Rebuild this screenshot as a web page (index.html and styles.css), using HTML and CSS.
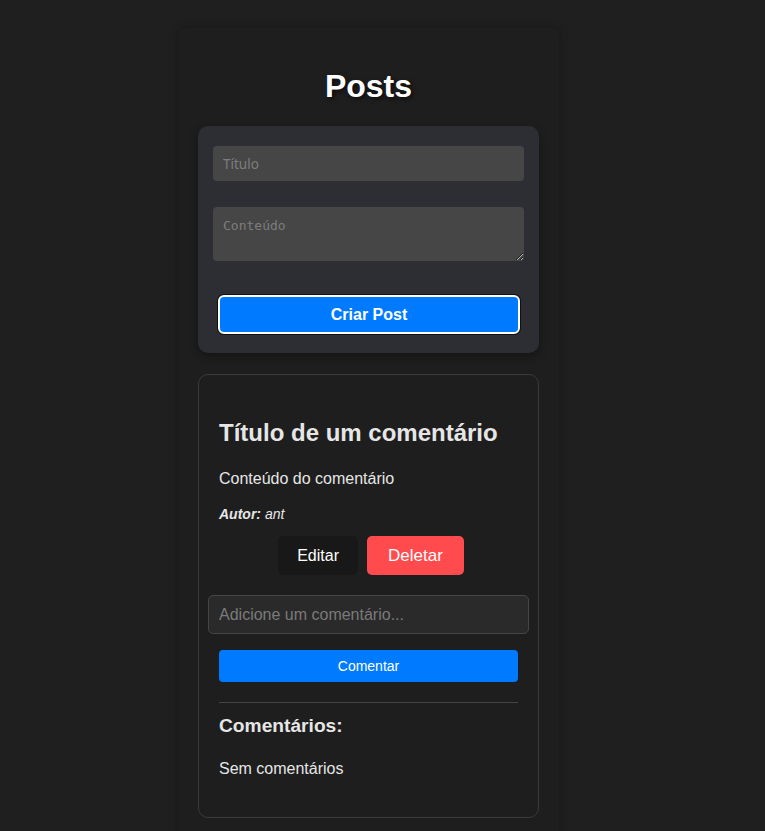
FILE: index.html
```html
<!DOCTYPE html>
<html lang="pt-BR">
<head>
<meta charset="utf-8">
<title>Posts</title>
<link rel="stylesheet" href="styles.css">
</head>
<body>
<div class="container">
  <h1 class="page-title">Posts</h1>
  <form class="post-form">
    <input class="field" type="text" placeholder="Título">
    <textarea class="field area" placeholder="Conteúdo"></textarea>
    <button class="create-btn" type="button">Criar Post</button>
  </form>
  <div class="post-card">
    <h2 class="post-title">Título de um comentário</h2>
    <p class="post-content">Conteúdo do comentário</p>
    <p class="post-author"><strong>Autor:</strong> ant</p>
    <div class="actions">
      <button class="btn-edit" type="button">Editar</button>
      <button class="btn-delete" type="button">Deletar</button>
    </div>
    <input class="comment-input" type="text" placeholder="Adicione um comentário...">
    <button class="comment-btn" type="button">Comentar</button>
    <div class="divider"></div>
    <h3 class="comments-title">Comentários:</h3>
    <p class="no-comments">Sem comentários</p>
  </div>
</div>
</body>
</html>
```

FILE: styles.css
```css
html, body {
  margin: 0;
  padding: 0;
  background: #1f1f1f;
  font-family: "Liberation Sans", Arial, sans-serif;
  color: #e6e6e6;
}

.container {
  width: 381px;
  box-sizing: border-box;
  margin: 28px 0 0 178px;
  padding: 20px 20px 40px;
  background: #1e1e1e;
  border-radius: 8px;
  box-shadow: 0 0 10px rgba(0, 0, 0, 0.25);
}

.page-title {
  margin: 20px 0 21px;
  text-align: center;
  font-size: 32px;
  line-height: 37px;
  font-weight: bold;
  color: #ffffff;
  text-shadow: 2px 2px 4px rgba(0, 0, 0, 0.6);
}

.post-form {
  display: flex;
  flex-direction: column;
  background: #2c2e33;
  border-radius: 10px;
  padding: 20px 15px 19px;
  box-shadow: 0 3px 8px rgba(0, 0, 0, 0.35);
}

.field {
  box-sizing: border-box;
  border: none;
  border-radius: 4px;
  background: #464646;
  color: #ddd;
  outline: none;
}

.field::placeholder {
  color: #7d7d7d;
}

input.field {
  height: 35px;
  padding: 0 10px;
  font-family: "Noto Sans", "DejaVu Sans", sans-serif;
  font-size: 13.5px;
}

.area {
  margin-top: 26px;
  height: 54px;
  padding: 11px 10px 10px;
  font-family: "DejaVu Sans Mono", "Liberation Mono", monospace;
  font-size: 13px;
  line-height: 15px;
  resize: vertical;
}

.create-btn {
  margin: 34px 4px 0 5px;
  height: 39px;
  box-sizing: border-box;
  border: 2px solid #ffffff;
  border-radius: 6px;
  box-shadow: 0 0 0 1px #111;
  background: #007bff;
  color: #ffffff;
  font-family: "Liberation Sans", Arial, sans-serif;
  font-size: 16px;
  font-weight: bold;
  cursor: pointer;
}

.post-card {
  display: flex;
  flex-direction: column;
  margin-top: 21px;
  padding: 0 20px 39px;
  border: 1px solid #3a3a3a;
  border-radius: 10px;
  background: #1e1e1e;
}

.post-title {
  margin: 44px 0 0;
  font-size: 24px;
  line-height: 28px;
  font-weight: bold;
  color: #e6e6e6;
}

.post-content {
  margin: 23px 0 0;
  font-size: 16px;
  line-height: 18px;
}

.post-author {
  margin: 18px 0 0;
  font-size: 14px;
  line-height: 16px;
  font-style: italic;
}

.actions {
  display: flex;
  justify-content: center;
  gap: 9px;
  margin-top: 14px;
  padding-left: 5px;
}

.btn-edit,
.btn-delete {
  height: 39px;
  border: none;
  border-radius: 5px;
  color: #ffffff;
  font-family: "Liberation Sans", Arial, sans-serif;
  cursor: pointer;
}

.btn-edit {
  padding: 0 19px;
  background: #181818;
  font-size: 16px;
}

.btn-delete {
  padding: 0 21px;
  background: #ff4b4e;
  font-size: 17px;
}

.comment-input {
  margin: 20px -11px 0;
  height: 39px;
  box-sizing: border-box;
  padding: 0 10px;
  border: 1px solid #454545;
  border-radius: 5px;
  background: #2a2a2a;
  color: #ddd;
  font-family: "Liberation Sans", Arial, sans-serif;
  font-size: 16px;
  outline: none;
}

.comment-input::placeholder {
  color: #7a7a7a;
}

.comment-btn {
  margin-top: 16px;
  height: 32px;
  border: none;
  border-radius: 4px;
  background: #007bff;
  color: #ffffff;
  font-family: "Liberation Sans", Arial, sans-serif;
  font-size: 14px;
  cursor: pointer;
}

.divider {
  margin-top: 20px;
  border-top: 1px solid #444;
}

.comments-title {
  margin: 12px 0 0;
  font-size: 19.2px;
  line-height: 22px;
  font-weight: bold;
}

.no-comments {
  margin: 23px 0 0;
  font-size: 16px;
  line-height: 18px;
}
```
